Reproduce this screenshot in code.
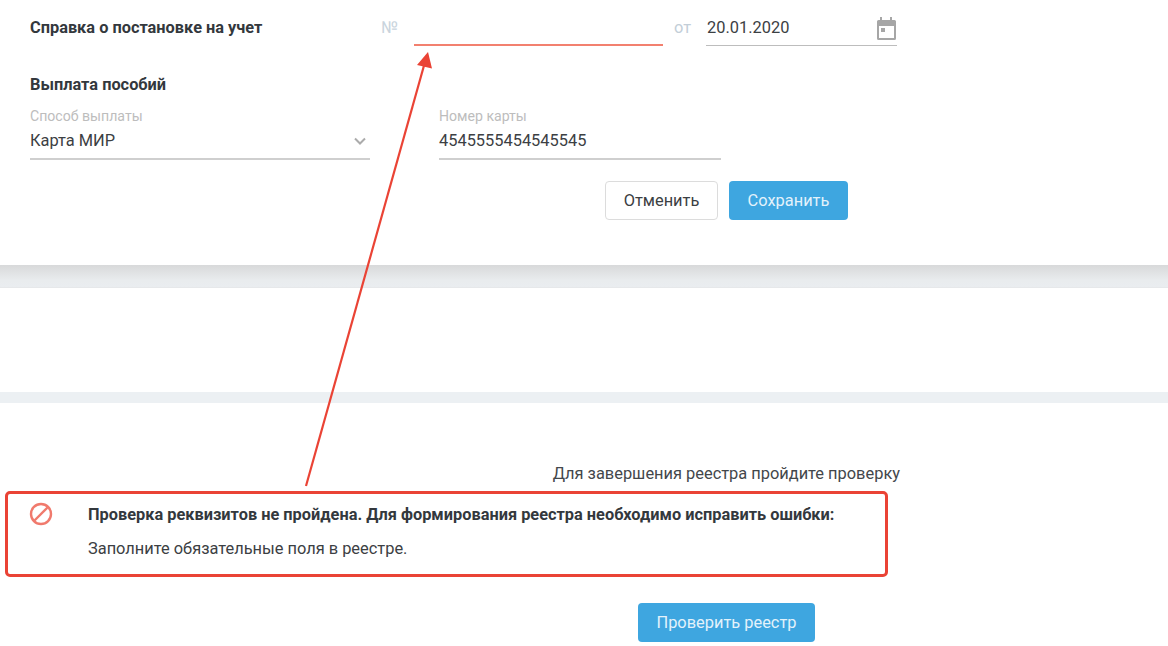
<script>
  const buttons = ['Отменить', 'Сохранить'];
</script>

<div class="page">
  <section class="panel">
    <div class="row-doc">
      <div class="doc-title">Справка о постановке на учет</div>
      <span class="hint no">№</span>
      <div class="num-line"></div>
      <span class="hint ot">от</span>
      <div class="line date">
        <span class="val">20.01.2020</span>
        <svg class="cal" width="20" height="23" viewBox="0 0 20 23">
          <path fill="#a6a6a6" d="M3 0h2v3h8V0h2v3h2.500A1.500 1.500 0 0 1 19 4.500V21.500A1.500 1.500 0 0 1 17.500 23H1.500A1.500 1.500 0 0 1 0 21.500V4.500A1.500 1.500 0 0 1 1.500 3H3z"/>
          <rect x="2" y="9" width="15" height="12" fill="#fff"/>
          <rect x="4" y="11" width="4" height="4" fill="#a6a6a6"/>
        </svg>
      </div>
    </div>
    <h3>Выплата пособий</h3>
    <div class="row-pay">
      <div class="field method">
        <label for="m">Способ выплаты</label>
        <div class="line" id="m">
          <span class="val">Карта МИР</span>
          <svg class="chev" width="12" height="8" viewBox="0 0 12 8"><path d="M1 1.500l5 5 5-5" fill="none" stroke="#ababab" stroke-width="2"/></svg>
        </div>
      </div>
      <div class="field card">
        <label for="c">Номер карты</label>
        <div class="line" id="c"><span class="val">4545555454545545</span></div>
      </div>
    </div>
    <div class="actions">
      <button class="btn ghost">{buttons[0]}</button>
      <button class="btn primary">{buttons[1]}</button>
    </div>
  </section>
  <div class="shade"></div>
  <div class="blank"></div>
  <div class="band"></div>
  <section class="bottom">
    <p class="note">Для завершения реестра пройдите проверку</p>
    <div class="alert">
      <svg class="ban" width="24" height="24" viewBox="0 0 24 24"><circle cx="12" cy="12" r="10" fill="none" stroke="#f07a6d" stroke-width="2.400"/><path d="M5 19 19 5" stroke="#f07a6d" stroke-width="2.400"/></svg>
      <div>
        <div class="alert-title">Проверка реквизитов не пройдена. Для формирования реестра необходимо исправить ошибки:</div>
        <div class="alert-text">Заполните обязательные поля в реестре.</div>
      </div>
    </div>
    <button class="btn primary check">Проверить реестр</button>
  </section>

  <svg class="arrow" width="1168" height="646" viewBox="0 0 1168 646">
    <line x1="306" y1="486" x2="425" y2="62" stroke="#ea4335" stroke-width="2.200"/>
    <path d="M428 52 417 65 432 68.500z" fill="#ea4335"/>
  </svg>
</div>

<style>
  :global(body) { margin: 0; background: #fff; }
  .page { position: relative; width: 1168px; height: 646px; overflow: hidden; font-family: Roboto, "Noto Sans", sans-serif; color: #3c4043; font-size: 16.4px; }
  .panel { height: 265px; box-sizing: border-box; padding: 0 0 0 30px; background: #fff; }
  .row-doc { display: flex; height: 46px; align-items: flex-end; }
  .doc-title { width: 351px; font-size: 16.35px; font-weight: 700; color: #33383d; line-height: 20px; padding-bottom: 8px; }
  .hint { color: #c9d4dd; font-size: 16.4px; line-height: 20px; padding-bottom: 8px; }
  .no { width: 33px; }
  .ot { width: 32px; margin-left: 11px; color: #c3ced8; }
  .line { display: flex; align-items: center; justify-content: space-between; border-bottom: 1px solid #bdbdbd; box-sizing: border-box; }
  .num-line { width: 249px; height: 2px; background: #f2806f; }
  .date { width: 191px; height: 30px; padding: 0 0 6px 1px; }
  .val { font-size: 16.4px; color: #3c4043; line-height: 20px; white-space: nowrap; }
  .cal { margin-top: 1px; flex: none; }
  h3 { margin: 29px 0 0; font-size: 16.35px; font-weight: 700; color: #33383d; line-height: 20px; }
  .row-pay { display: flex; margin-top: 12px; gap: 69px; }
  .field label { display: block; font-size: 14.1px; line-height: 18px; color: #bdbdbd; }
  .method { width: 340px; }
  .card { width: 282px; }
  .field .line { border-bottom: 2px solid #cfcfcf; height: 35px; padding-bottom: 2px; }
  .chev { margin-right: 4px; }
  .actions { display: flex; gap: 11px; margin: 21px 0 0 575px; }
  .btn { height: 39px; border-radius: 4px; font-family: inherit; font-size: 16.4px; padding: 0; box-sizing: border-box; }
  .ghost { width: 113px; background: #fff; border: 1px solid #dcdcdc; color: #3c4043; }
  .primary { width: 119px; background: #3ea6e0; border: 0; color: #e3f2fb; }
  .shade { height: 23px; box-sizing: border-box; background: linear-gradient(#d8d9da, #e9ecee 70%, #eaedf0); border-bottom: 1px solid #e6e8ea; }
  .blank { height: 104px; }
  .band { height: 11px; background: #ecf0f3; }
  .bottom { position: relative; }
  .note { margin: 0; padding: 61px 268px 0 0; text-align: right; font-size: 16.4px; line-height: 20px; color: #43474b; }
  .alert { display: flex; width: 883px; height: 86px; box-sizing: border-box; margin: 7px 0 0 5px; border: 3px solid #ea4335; border-radius: 5px; padding: 8px 0 0 21px; gap: 35px; }
  .ban { flex: none; }
  .alert-title { font-size: 16.35px; font-weight: 700; line-height: 20px; color: #33383d; padding-top: 3px; white-space: nowrap; }
  .alert-text { font-size: 16.4px; line-height: 20px; margin-top: 14px; color: #3c4043; }
  .check { display: block; width: 177px; margin: 26px 0 0 638px; height: 39px; }
  .arrow { position: absolute; left: 0; top: 0; pointer-events: none; }
</style>
